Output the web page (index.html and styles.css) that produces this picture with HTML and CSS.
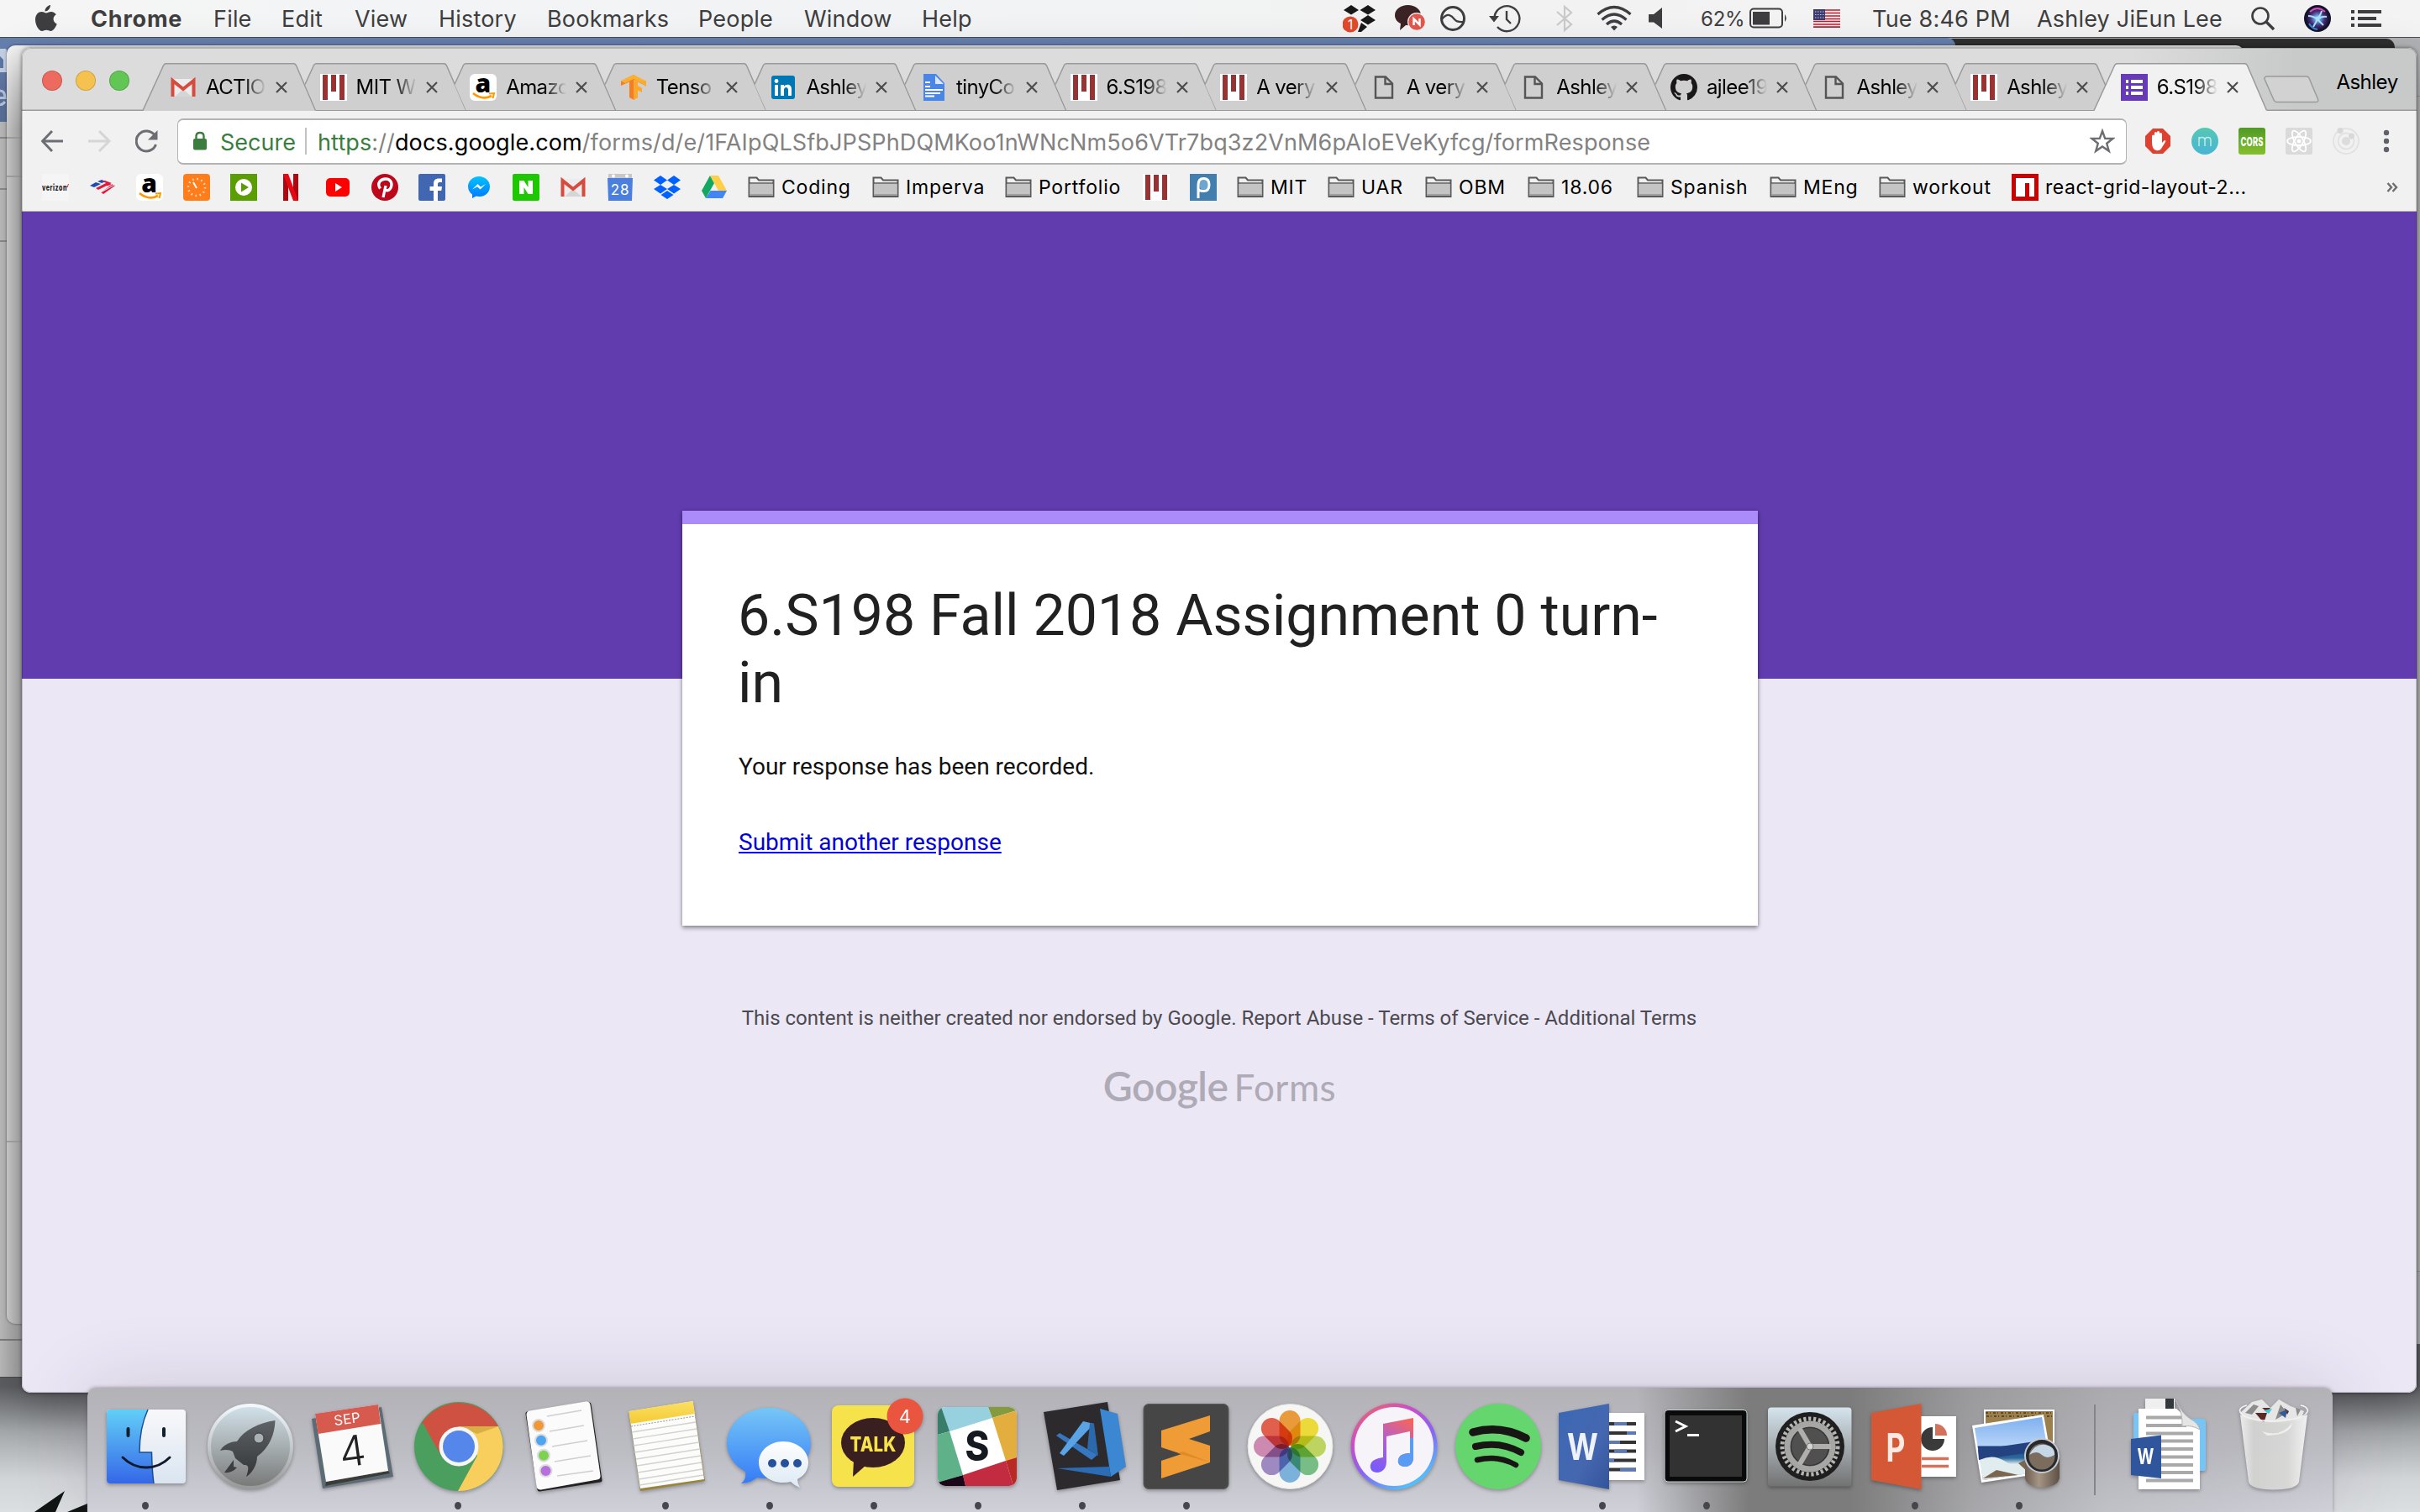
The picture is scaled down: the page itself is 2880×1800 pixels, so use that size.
FILE: index.html
```html
<!DOCTYPE html>
<html lang="en">
<head>
<meta charset="utf-8">
<title>6.S198 Fall 2018 Assignment 0 turn-in</title>
<link rel="stylesheet" href="styles.css">
</head>
<body>
<svg class="defs" width="0" height="0" aria-hidden="true">
  <defs>
    <linearGradient id="gFinder" x1="0" y1="0" x2="0" y2="1"><stop offset="0" stop-color="#62cff7"/><stop offset="1" stop-color="#3567e8"/></linearGradient>
    <linearGradient id="gFinderR" x1="0" y1="0" x2="0" y2="1"><stop offset="0" stop-color="#f8f8fa"/><stop offset="1" stop-color="#dae5f1"/></linearGradient>
    <linearGradient id="gLaunch" x1="0" y1="0" x2="0" y2="1"><stop offset="0" stop-color="#d3e2ea"/><stop offset=".55" stop-color="#a2a9ab"/><stop offset="1" stop-color="#777"/></linearGradient>
    <linearGradient id="gRocket" x1="0" y1="0" x2="0" y2="1"><stop offset="0" stop-color="#5e6366"/><stop offset="1" stop-color="#343638"/></linearGradient>
    <linearGradient id="gRim" x1="0" y1="0" x2="0" y2="1"><stop offset="0" stop-color="#f1f9fd"/><stop offset="1" stop-color="#999"/></linearGradient>
    <linearGradient id="gMsg" x1="0" y1="0" x2="0" y2="1"><stop offset="0" stop-color="#76c6f6"/><stop offset="1" stop-color="#357cf7"/></linearGradient>
    <linearGradient id="gMsgW" x1="0" y1="0" x2="0" y2="1"><stop offset="0" stop-color="#fff"/><stop offset="1" stop-color="#dce9f4"/></linearGradient>
    <linearGradient id="gNote" x1="0" y1="0" x2="0" y2="1"><stop offset="0" stop-color="#fbe066"/><stop offset="1" stop-color="#f4ca32"/></linearGradient>
    <linearGradient id="gRing" x1="0" y1="0" x2=".6" y2="1"><stop offset="0" stop-color="#fa6a52"/><stop offset=".35" stop-color="#c84fc8"/><stop offset=".65" stop-color="#8a62f6"/><stop offset="1" stop-color="#54bdfb"/></linearGradient>
    <linearGradient id="gTune" x1=".8" y1="0" x2=".3" y2="1"><stop offset="0" stop-color="#f2655f"/><stop offset=".5" stop-color="#b25fd0"/><stop offset="1" stop-color="#7b5cf8"/></linearGradient>
    <linearGradient id="gWord" x1="0" y1="0" x2="1" y2="1"><stop offset="0" stop-color="#3c68b4"/><stop offset=".6" stop-color="#4567b0"/><stop offset="1" stop-color="#33549a"/></linearGradient>
    <linearGradient id="gPref" x1="0" y1="0" x2="0" y2="1"><stop offset="0" stop-color="#d5e4ec"/><stop offset=".5" stop-color="#a4abaf"/><stop offset="1" stop-color="#727272"/></linearGradient>
    <linearGradient id="gSea" x1="0" y1="0" x2="0" y2="1"><stop offset="0" stop-color="#7fb0f0"/><stop offset=".45" stop-color="#b5d3f8"/><stop offset=".47" stop-color="#1e3f7e"/><stop offset=".65" stop-color="#2d6a9c"/><stop offset=".75" stop-color="#e3eef0"/><stop offset="1" stop-color="#86715a"/></linearGradient>
    <linearGradient id="gLoupe" x1="0" y1="0" x2="1" y2="0"><stop offset="0" stop-color="#6b5d50"/><stop offset=".4" stop-color="#a59585"/><stop offset="1" stop-color="#5c5044"/></linearGradient>
    <linearGradient id="gBin" x1="0" y1="0" x2="1" y2="0"><stop offset="0" stop-color="#f1f1f1"/><stop offset=".2" stop-color="#d4d4d3"/><stop offset=".7" stop-color="#dadad9"/><stop offset="1" stop-color="#f6f6f6"/></linearGradient>
    <linearGradient id="gCors" x1="0" y1="0" x2="0" y2="1"><stop offset="0" stop-color="#4f9a26"/><stop offset="1" stop-color="#86bf2c"/></linearGradient>
    <linearGradient id="gM" x1="0" y1="0" x2="0" y2="1"><stop offset="0" stop-color="#57c7b4"/><stop offset="1" stop-color="#48b5d3"/></linearGradient>
    <linearGradient id="gMess" x1="0" y1="0" x2="0" y2="1"><stop offset="0" stop-color="#00c3ff"/><stop offset="1" stop-color="#0078ff"/></linearGradient>
    <radialGradient id="gSiri"><stop offset="0" stop-color="#e8f6ff"/><stop offset=".3" stop-color="#5a8fd8"/><stop offset=".6" stop-color="#4b2f78"/><stop offset="1" stop-color="#14102c"/></radialGradient>

    <symbol id="tab" viewBox="0 0 214 57"><path d="M18 25.500 28.500 2.500Q29.500.7 32 .7H183Q185.500.7 186.500 3L209.500 56H31.500Z" fill="#cfcfcf"/><path d="M18 25.500 28.500 2.500Q29.500.7 32 .7H183Q185.500.7 186.500 3L209.500 56" fill="none" stroke="#999" stroke-width="1.500"/></symbol>
    <symbol id="tab-full" viewBox="0 0 214 57"><path d="M4 57 28.500 3Q29.500.7 32 .7H183Q185.500.7 186.500 3L210 57Z" fill="currentColor"/><path d="M4 56.500 28.500 3Q29.500.7 32 .7H183Q185.500.7 186.500 3L209.500 56.500" fill="none" stroke="#999" stroke-width="1.500"/></symbol>
    <symbol id="close" viewBox="0 0 16 16"><path d="M2 2 14 14M14 2 2 14" stroke="#4c4c4c" stroke-width="2.200"/></symbol>
    <symbol id="gmail" viewBox="0 0 32 32"><path d="M2 6H30V27H2Z" fill="#ececec"/><path d="M6 27 16 18 26 27Z" fill="#d5d5d5"/><path d="M3.500 27V8L16 18 28.500 8V27" fill="none" stroke="#d54b3d" stroke-width="4"/></symbol>
    <symbol id="mit" viewBox="0 0 32 32"><path d="M0 0H32V32H0Z" fill="#fff"/><path d="M3 1H9V31H3ZM13 1H19V21H13ZM23 1H29V31H23Z" fill="#933"/></symbol>
    <symbol id="amazon" viewBox="0 0 32 32"><rect width="32" height="32" rx="6" fill="#fff"/><text x="16" y="22" text-anchor="middle" font-family="Open Sans" font-weight="800" font-size="30">a</text><path d="M4 23Q15 32 26 26" fill="none" stroke="#f90" stroke-width="2.600"/><path d="M23 23.500 29 23 27.500 29" fill="none" stroke="#f90" stroke-width="2"/></symbol>
    <symbol id="tf" viewBox="0 0 32 32"><path d="M16 1 1 8.500V14L11 9.500V28L16.500 31V7L26 12V7Z" fill="#f57e20"/><path d="M16 1 1 8.500 6 11 16 6 26 11.500 31 8.500Z" fill="#fdb02e"/><path d="M31 8.500V15L26 12V9ZM16.500 9 21 7V14L26 17V22L21 19.500V28L16.500 31Z" fill="#ffa726"/></symbol>
    <symbol id="linkedin" viewBox="0 0 32 32"><rect x="2" y="2" width="28" height="28" rx="3" fill="#0077b5"/><path d="M6 13H10V26H6ZM13 13H17V15C19 11.500 26 11.500 26 18V26H22V19C22 15 17 15 17 19V26H13Z" fill="#fff"/><circle cx="8" cy="8.500" r="2.400" fill="#fff"/></symbol>
    <symbol id="docs" viewBox="0 0 32 32"><path d="M4 0H19L29 11V32H4Z" fill="#4a86e8"/><path d="M18 2V12H28Z" fill="#dbe7fb"/><path d="M6 10H12M6 15H12M6 19H27M6 23H24M6 26.500H17" stroke="#fff" stroke-width="2"/></symbol>
    <symbol id="file" viewBox="0 0 32 32"><path d="M6 3.500H18L26 11.500V28.500H6Z" fill="none" stroke="#555" stroke-width="2.400"/><path d="M17.500 3.500V12H26" fill="none" stroke="#555" stroke-width="2.400"/></symbol>
    <symbol id="github" viewBox="0 0 16 16"><path fill="#191717" d="M8 0C3.580 0 0 3.580 0 8c0 3.540 2.290 6.530 5.470 7.590.4.070.55-.17.55-.38 0-.19-.01-.82-.01-1.490-2.010.37-2.530-.49-2.690-.94-.09-.23-.48-.94-.82-1.130-.28-.15-.68-.52-.01-.53.63-.01 1.080.58 1.230.82.72 1.210 1.870.87 2.330.66.070-.52.28-.87.51-1.070-1.780-.2-3.640-.89-3.640-3.950 0-.87.31-1.590.82-2.150-.08-.2-.36-1.020.08-2.120 0 0 .67-.21 2.200.82.64-.18 1.320-.27 2-.27s1.360.09 2 .27c1.530-1.040 2.200-.82 2.200-.82.44 1.100.16 1.920.08 2.120.51.56.82 1.270.82 2.150 0 3.070-1.870 3.750-3.650 3.950.29.25.54.73.54 1.480 0 1.070-.01 1.930-.01 2.200 0 .21.15.46.55.38A8.010 8.010 0 0 0 16 8c0-4.420-3.580-8-8-8z"/></symbol>
    <symbol id="forms" viewBox="0 0 32 32"><path d="M0 0H32V32H0Z" fill="#673ab7"/><path d="M6 9H9M6 16H9M6 23H9M12 9H26M12 16H26M12 23H26" stroke="#fff" stroke-width="4"/></symbol>
    <symbol id="folder" viewBox="0 0 32 32"><path d="M1.500 27V4.500H10.500L13 7.500H30.500V27Z" fill="#f0f0f0" stroke="#5a5a5a" stroke-width="2"/><path d="M2.500 12H29.500V26H2.500Z" fill="#c4c4c4"/><path d="M2.500 24H29.500V26H2.500Z" fill="#a0a0a0"/><path d="M1.500 11H30.500" stroke="#5a5a5a" stroke-width="1.600"/></symbol>
  </defs>
</svg>

<div class="wallpaper">
  <svg class="spikes" viewBox="0 0 104 50"><path d="M41 50 77 25 66 50ZM80 50 104 40V50Z" fill="#111513"/></svg>
</div>
<div class="win win-facebook"><svg viewBox="0 0 8 100" width="8" height="100"><path d="M0 13H6Q8 13 8 16V41H0Z" fill="#c5cfe4"/><path d="M0 22 4 26V36H0Z" fill="#5d76a5"/><path d="M0 71.500H6Q6 63 0 63M6 76Q3 80 0 79.500" fill="none" stroke="#b9c6de" stroke-width="3"/></svg></div>
<div class="win win-dark"></div>
<div class="win win-right"></div>
<div class="win win-back"></div>

<header class="menubar">
  <svg width="26" height="32" viewBox="0 0 26 32"><path d="M18 0C18 4 15 7.500 11.500 7.500 11.200 4 14.500.5 18 0ZM13 9.500C14.500 9.500 16 8 19 8 21.500 8 23.500 9.300 24.800 11.200 20 14 20.800 20.500 25.700 22.500 24 27 21 31 18.500 31 16.500 31 15.500 29.800 13.200 29.800 11 29.800 9.800 31 8 31 4.500 31 0 24 0 17.500 0 11 4 8 7.500 8 10 8 11.800 9.500 13 9.500Z" fill="#3e3e40"/></svg>
  <b>Chrome</b><span>File</span><span>Edit</span><span>View</span><span>History</span><span>Bookmarks</span><span>People</span><span>Window</span><span>Help</span>
  <svg width="40" height="34" viewBox="0 0 40 34"><path d="M10 1 19 7 10 12.500 1 7ZM30 1 39 7 30 12.500 20.500 7ZM30 13 39 19 30 24.500 21 19ZM22 22 29 27 22 33 18 33Z" fill="#191919"/><circle cx="9" cy="24" r="9.500" fill="#e0492c"/><text x="9" y="30" text-anchor="middle" font-size="16" fill="#fff">1</text></svg>
  <svg width="38" height="34" viewBox="0 0 38 34"><path d="M15.500 1C7 1 0 6 0 13 0 17.500 2.500 21 7 23L6 31 13 25C24 26 31 21 31 13 31 6 24 1 15.500 1Z" fill="#3b2224"/><circle cx="26" cy="21" r="11" fill="#f2f2f2"/><circle cx="26" cy="21" r="9.800" fill="#e2574c"/><path d="M22.500 25V17.500L29.500 24.500V17" fill="none" stroke="#fff" stroke-width="2.500"/></svg>
  <svg width="31" height="32" viewBox="0 0 31 32"><circle cx="15" cy="16" r="13.500" fill="none" stroke="#3e3e40" stroke-width="3"/><path d="M2 17C9 8 14 13 17 17S25 20 28 20" fill="none" stroke="#3e3e40" stroke-width="2.200"/></svg>
  <svg width="38" height="34" viewBox="0 0 38 34"><path d="M6.500 15A15 15 0 1 1 10 27" fill="none" stroke="#3e3e40" stroke-width="2.400"/><path d="M0 14H12L6 21.500Z" fill="#3e3e40"/><path d="M21 8V18L26 23" fill="none" stroke="#3e3e40" stroke-width="2.400"/></svg>
  <svg width="20" height="34" viewBox="0 0 20 34"><path d="M1 9 18 24 10 31V3L18 10 1 25" fill="none" stroke="#c9c9c9" stroke-width="2.200"/></svg>
  <svg width="42" height="32" viewBox="0 0 42 32"><path d="M1.500 11Q21-6 40.500 11M6.500 17.500Q21 4.500 35.500 17.500M12 23Q21 15 30 23" fill="none" stroke="#3e3e40" stroke-width="3.200"/><path d="M21 30.500 17 26Q21 23 25 26Z" fill="#3e3e40"/></svg>
  <svg width="18" height="26" viewBox="0 0 18 26"><path d="M0 8H6L16 0V25L6 17.500H0Z" fill="#3e3e40"/></svg>
  <span class="battery-text">62%</span>
  <svg width="47" height="26" viewBox="0 0 47 26"><rect x="1" y="1.500" width="38" height="22" rx="4" fill="none" stroke="#3e3e40" stroke-width="2"/><path d="M4 5H24V20.500H4Z" fill="#3e3e40"/><path d="M42 8Q45.500 12.500 42 17Z" fill="#3e3e40"/></svg>
  <svg width="32" height="22" viewBox="0 0 32 22"><path d="M0 0H32V22H0Z" fill="#f4ecec"/><path d="M0 1H32M0 4.500H32M0 8H32M0 11.500H32M0 14.500H32M0 18H32M0 21.200H32" stroke="#b22234" stroke-width="1.700"/><path d="M0 0H14V13H0Z" fill="#3c3b6e"/><path d="M2 3H14M2 6.500H14M2 10H14" stroke="#c9c9dc" stroke-width="1.200" stroke-dasharray="1.500 1.500"/></svg>
  <span>Tue 8:46 PM</span><span>Ashley JiEun Lee</span>
  <svg width="30" height="30" viewBox="0 0 30 30"><circle cx="12" cy="12" r="9.500" fill="none" stroke="#3e3e40" stroke-width="2.600"/><path d="M18.500 18.500 28 28" stroke="#3e3e40" stroke-width="3.400"/></svg>
  <svg width="32" height="32" viewBox="0 0 32 32"><circle cx="16" cy="16" r="16" fill="#15122b"/><circle cx="16" cy="16" r="14" fill="url(#gSiri)"/><path d="M5 13Q11 13 16 17 20 11 21 7M16 17Q21 13 27 14M16 17 11 26M16 17 23 24" stroke="#a5e3f4" stroke-width="2" fill="none"/><path d="M7 8Q16 0 25 8" stroke="#d34fb5" stroke-width="2" fill="none"/><path d="M6 22Q9 28 16 29" stroke="#2f8bd8" stroke-width="2" fill="none"/></svg>
  <svg width="36" height="22" viewBox="0 0 36 22"><path d="M0 3H4M0 11H4M0 19H4M8 3H36M8 11H30M8 19H36" stroke="#3e3e40" stroke-width="4"/></svg>
</header>

<main class="browser">
  <div class="tabstrip">
    <div class="lights"><i class="red"></i><i class="yellow"></i><i class="green"></i></div>
    <div class="tabs">
      <div class="tab"><svg class="shape"><use href="#tab-full"/></svg><svg class="fav"><use href="#gmail"/></svg><span>ACTIO</span><svg class="x"><use href="#close"/></svg></div>
      <div class="tab"><svg class="shape"><use href="#tab"/></svg><svg class="fav"><use href="#mit"/></svg><span>MIT W</span><svg class="x"><use href="#close"/></svg></div>
      <div class="tab"><svg class="shape"><use href="#tab"/></svg><svg class="fav"><use href="#amazon"/></svg><span>Amazo</span><svg class="x"><use href="#close"/></svg></div>
      <div class="tab"><svg class="shape"><use href="#tab"/></svg><svg class="fav"><use href="#tf"/></svg><span>Tenso</span><svg class="x"><use href="#close"/></svg></div>
      <div class="tab"><svg class="shape"><use href="#tab"/></svg><svg class="fav"><use href="#linkedin"/></svg><span>Ashley</span><svg class="x"><use href="#close"/></svg></div>
      <div class="tab"><svg class="shape"><use href="#tab"/></svg><svg class="fav"><use href="#docs"/></svg><span>tinyCo</span><svg class="x"><use href="#close"/></svg></div>
      <div class="tab"><svg class="shape"><use href="#tab"/></svg><svg class="fav"><use href="#mit"/></svg><span>6.S198</span><svg class="x"><use href="#close"/></svg></div>
      <div class="tab"><svg class="shape"><use href="#tab"/></svg><svg class="fav"><use href="#mit"/></svg><span>A very</span><svg class="x"><use href="#close"/></svg></div>
      <div class="tab"><svg class="shape"><use href="#tab"/></svg><svg class="fav"><use href="#file"/></svg><span>A very</span><svg class="x"><use href="#close"/></svg></div>
      <div class="tab"><svg class="shape"><use href="#tab"/></svg><svg class="fav"><use href="#file"/></svg><span>Ashley</span><svg class="x"><use href="#close"/></svg></div>
      <div class="tab"><svg class="shape"><use href="#tab"/></svg><svg class="fav"><use href="#github"/></svg><span>ajlee19</span><svg class="x"><use href="#close"/></svg></div>
      <div class="tab"><svg class="shape"><use href="#tab"/></svg><svg class="fav"><use href="#file"/></svg><span>Ashley</span><svg class="x"><use href="#close"/></svg></div>
      <div class="tab"><svg class="shape"><use href="#tab"/></svg><svg class="fav"><use href="#mit"/></svg><span>Ashley</span><svg class="x"><use href="#close"/></svg></div>
      <div class="tab active"><svg class="shape"><use href="#tab-full"/></svg><svg class="fav"><use href="#forms"/></svg><span>6.S198</span><svg class="x"><use href="#close"/></svg></div>
    </div>
    <svg class="newtab" width="66" height="33" viewBox="0 0 66 33"><path d="M4 1H51Q53 1 54 3L64.500 28Q65.500 31.500 62 31.500H15Q13 31.500 12 29L1 4Q.5 1 4 1Z" fill="#d2d2d2" stroke="#9b9b9b" stroke-width="1.500"/></svg>
    <span class="profile">Ashley</span>
  </div>

  <div class="toolbar">
    <svg width="28" height="28" viewBox="0 0 28 28"><path d="M26 14H2M13 2 1.500 14 13 26" fill="none" stroke="#6c6e73" stroke-width="3"/></svg>
    <svg width="28" height="28" viewBox="0 0 28 28"><path d="M0 14H25M13 2 25 14 13 26" fill="none" stroke="#d5d5d5" stroke-width="3"/></svg>
    <svg width="28" height="28" viewBox="0 0 28 28"><path d="M23 7A12 12 0 1 0 24.500 18" fill="none" stroke="#6c6e73" stroke-width="3"/><path d="M26.500 1V12.500H15Z" fill="#6c6e73"/></svg>
    <div class="omnibox">
      <svg width="18" height="24" viewBox="0 0 18 24"><rect x="0" y="9" width="16" height="13.500" rx="2" fill="#3a7d3e"/><path d="M3.500 10V6Q3.500 2 8 2T12.500 6V10" fill="none" stroke="#3a7d3e" stroke-width="2.400"/></svg>
      <span class="secure">Secure</span><i class="rule"></i>
      <span class="url"><em>https</em>://<b>docs.google.com</b>/forms/d/e/1FAIpQLSfbJPSPhDQMKoo1nWNcNm5o6VTr7bq3z2VnM6pAIoEVeKyfcg/formResponse</span>
      <svg width="30" height="30" viewBox="0 0 30 30"><path d="M15 3 18.200 11.800 27.500 12 20.200 17.800 22.800 26.800 15 21.500 7.200 26.800 9.800 17.800 2.500 12 11.800 11.800Z" fill="none" stroke="#6c6e73" stroke-width="2.400"/></svg>
    </div>
    <div class="extensions">
      <svg width="32" height="32" viewBox="0 0 32 32"><path d="M10 1H22L31 10V22L22 31H10L1 22V10Z" fill="#e0402f"/><path d="M9 17V9.500Q10.500 7.500 12 9.500V15V6Q13.500 4 15 6V14V5Q16.500 3 18 5V14V7Q19.500 5 21 7V18L24 15Q26 15 25 17L20 25Q18 28 14 27 9 26 9 17Z" fill="#fff"/></svg>
      <svg width="32" height="32" viewBox="0 0 32 32"><circle cx="16" cy="16" r="16" fill="url(#gM)"/><path d="M9 22V11M9 15Q9 11.500 12.500 11.500T16 15V22M16 15Q16 11.500 19.500 11.500T23 15V22" fill="none" stroke="#bfeaea" stroke-width="1.500"/></svg>
      <svg width="32" height="32" viewBox="0 0 32 32"><rect width="32" height="32" rx="3" fill="url(#gCors)"/><text x="16" y="21.500" text-anchor="middle" font-size="15" font-weight="800" textLength="27" lengthAdjust="spacingAndGlyphs" fill="#fff">CORS</text></svg>
      <svg width="32" height="32" viewBox="0 0 32 32"><rect width="32" height="32" rx="2" fill="#dadada"/><g fill="none" stroke="#fff" stroke-width="1.800"><ellipse cx="16" cy="16" rx="14" ry="5"/><ellipse cx="16" cy="16" rx="14" ry="5" transform="rotate(60 16 16)"/><ellipse cx="16" cy="16" rx="14" ry="5" transform="rotate(120 16 16)"/></g><circle cx="16" cy="16" r="2.500" fill="#fff"/></svg>
      <svg width="32" height="32" viewBox="0 0 32 32"><g fill="none" stroke="#e2e2e2" stroke-width="2"><circle cx="16" cy="16" r="15"/><circle cx="16" cy="16" r="9.500"/></g><circle cx="16" cy="16" r="5" fill="#dcdcdc"/><circle cx="9" cy="3.500" r="3.500" fill="#d8d8d8"/><circle cx="22.500" cy="10" r="3.500" fill="#d8d8d8"/></svg>
      <svg width="8" height="28" viewBox="0 0 8 28"><circle cx="4" cy="4" r="3.200" fill="#5f6368"/><circle cx="4" cy="14" r="3.200" fill="#5f6368"/><circle cx="4" cy="24" r="3.200" fill="#5f6368"/></svg>
    </div>
  </div>

  <nav class="bookmarks">
    <a><svg viewBox="0 0 32 32"><path d="M0 0H32V32H0Z" fill="#f5f5f5"/><text x="0" y="20" font-size="10" font-weight="800" textLength="30" lengthAdjust="spacingAndGlyphs" fill="#222">verizon</text><path d="M28.500 14 30 16 31.500 12" fill="none" stroke="#d03030"/></svg></a>
    <a><svg viewBox="0 0 32 32"><path d="M1 14 8 10 14 12 6 16ZM10 9 15 7 20 9 15 11Z" fill="#1a4fb0"/><path d="M8 17 22 10 31 14 17 24 14 22 24 15 21 14 11 19ZM15 8 19 8 27 11 22 12Z" fill="#e4183a"/><path d="M11 20 27 12.500M14 22 30 13" stroke="#f2f2f2" stroke-width="1"/></svg></a>
    <a><svg><use href="#amazon"/></svg></a>
    <a><svg viewBox="0 0 32 32"><rect width="32" height="32" rx="4" fill="#ff7d1a"/><circle cx="16" cy="16" r="10" fill="none" stroke="#ffe3cc" stroke-width="2.500" stroke-dasharray="1.500 3.730"/><path d="M12 10 16 17" stroke="#fff" stroke-width="2"/></svg></a>
    <a><svg viewBox="0 0 32 32"><path d="M0 0H32V32H0Z" fill="#5a9e04"/><circle cx="16" cy="16" r="10" fill="#fff"/><path d="M13 10.500 22 16 13 21.500Z" fill="#5a9e04"/></svg></a>
    <a><svg viewBox="0 0 32 32"><path d="M7 0H13V32H7ZM19 0H25V32H19Z" fill="#b1060f"/><path d="M7 0H13L25 32H19Z" fill="#e50914"/></svg></a>
    <a><svg viewBox="0 0 32 32"><rect x="2" y="5" width="28" height="22" rx="5" fill="#f00"/><path d="M13 11 21 16 13 21Z" fill="#fff"/></svg></a>
    <a><svg viewBox="0 0 32 32"><circle cx="16" cy="16" r="16" fill="#bd081c"/><path d="M14 28 17 14M10.500 17.500C6 11 11 6 17 6 23 6 25 11 23.500 15.500 22 20 17.500 21 15.500 18" fill="none" stroke="#fff" stroke-width="3.300"/></svg></a>
    <a><svg viewBox="0 0 32 32"><rect width="32" height="32" rx="2" fill="#4267b2"/><path d="M18 32V20H13.500V15H18V11.500C18 7.500 20.500 5.500 24 5.500H28V10H25C23.300 10 23 11 23 12.500V15H28L27.300 20H23V32Z" fill="#fff"/></svg></a>
    <a><svg viewBox="0 0 32 32"><path d="M16 3C9 3 3 8 3 15 3 19 5 22.500 8 24.500V29L12.500 26.600C23 29 29 22 29 15 29 8 23 3 16 3Z" fill="url(#gMess)"/><path d="M8 18.500 14.500 12 18 15.500 24 12 17.500 18.500 14 15.300Z" fill="#fff"/></svg></a>
    <a><svg viewBox="0 0 32 32"><rect width="32" height="32" rx="2" fill="#1ec800"/><path d="M8 8H13.500L18.500 16V8H24V24H18.500L13.500 16V24H8Z" fill="#fff"/></svg></a>
    <a><svg><use href="#gmail"/></svg></a>
    <a><svg viewBox="0 0 32 32"><path d="M2 0H30V6H2Z" fill="#c8c8c8"/><circle cx="8" cy="2.500" r="2" fill="#fff"/><circle cx="24" cy="2.500" r="2" fill="#fff"/><path d="M1 5H31L30 32H2Z" fill="#4a7fe0"/><text x="16" y="25" text-anchor="middle" font-size="17" fill="#fff">28</text></svg></a>
    <a><svg viewBox="0 0 32 32"><path d="M8 2 16 7.500 8 13 0 7.500ZM24 2 32 7.500 24 13 16 7.500ZM8 13 16 18 8 23.500 0 18ZM24 13 32 18 24 23.500 16 18ZM16 20 23.500 25 16 30 8.500 25Z" fill="#0061ff"/></svg></a>
    <a><svg viewBox="0 0 32 32"><path d="M11 2 16 11 6 29 1 20Z" fill="#11a861"/><path d="M11 2H21L31 20H21Z" fill="#ffcf48"/><path d="M11.500 20H31L26 29H6Z" fill="#4285f4"/></svg></a>
    <a><svg><use href="#folder"/></svg>Coding</a>
    <a><svg><use href="#folder"/></svg>Imperva</a>
    <a><svg><use href="#folder"/></svg>Portfolio</a>
    <a><svg><use href="#mit"/></svg></a>
    <a><svg viewBox="0 0 32 32"><path d="M0 0H32V32H0Z" fill="#427eae"/><circle cx="17" cy="13" r="6" fill="#6ea6d0"/><path d="M10 29V13Q10 5.500 16.500 5.500T23 13 16.500 20.500 12 18" fill="none" stroke="#fff" stroke-width="3"/></svg></a>
    <a><svg><use href="#folder"/></svg>MIT</a>
    <a><svg><use href="#folder"/></svg>UAR</a>
    <a><svg><use href="#folder"/></svg>OBM</a>
    <a><svg><use href="#folder"/></svg>18.06</a>
    <a><svg><use href="#folder"/></svg>Spanish</a>
    <a><svg><use href="#folder"/></svg>MEng</a>
    <a><svg><use href="#folder"/></svg>workout</a>
    <a class="tight"><svg viewBox="0 0 32 32"><path d="M0 0H32V32H0Z" fill="#cb0000"/><path d="M5 5H27V27H21V11H16V27H5Z" fill="#fff"/></svg>react-grid-layout-2...</a>
    <svg class="more" viewBox="0 0 14 12"><path d="M1.500 1 6 6 1.500 11M7.500 1 12 6 7.500 11" fill="none" stroke="#6c6e73" stroke-width="2.400"/></svg>
  </nav>

  <section class="page">
    <article class="card">
      <h1>6.S198 Fall 2018 Assignment 0 turn-in</h1>
      <p>Your response has been recorded.</p>
      <a href="#">Submit another response</a>
    </article>
    <p class="legal">This content is neither created nor endorsed by Google. Report Abuse - Terms of Service - Additional Terms</p>
    <p class="logo"><b>Google</b><span>Forms</span></p>
  </section>
</main>

<footer class="dock">
  <div class="app run"><svg viewBox="0 0 124 148"><rect x="15" y="26" width="94" height="88" rx="4" fill="url(#gFinderR)"/><path d="M64 26H19Q15 26 15 30V110Q15 114 19 114H71Q69 100 68.500 77H54Q54 48 64 26Z" fill="url(#gFinder)"/><path d="M64 26Q54 48 54 77H68.500Q69 100 71 114" fill="none" stroke="#1c4f8e" stroke-width="1.500"/><path d="M40.500 49V57M83 49V57" stroke="#10202e" stroke-width="4" stroke-linecap="round"/><path d="M34 83Q46 95 62 95T90 83" fill="none" stroke="#101a2c" stroke-width="3" stroke-linecap="round"/></svg></div>
  <div class="app"><svg viewBox="0 0 124 148"><circle cx="62" cy="70" r="49" fill="url(#gLaunch)" stroke="url(#gRim)" stroke-width="4"/><path d="M91.500 39C72 42 55 50 46 64 38 64 30 68 26 75 32 73 38 74 41 76L44 84 54 92C58 92 62 92 57 106 64 102 70 92 70 82 84 72 91 56 91.500 39Z" fill="url(#gRocket)"/><path d="M42 86 31 101Q40 102 46 95L42 94Z" fill="#3c3e40"/><circle cx="72" cy="60" r="6" fill="#a9b1b5" stroke="#3b3d3f"/></svg></div>
  <div class="app"><svg viewBox="0 0 124 148"><path d="M11 37 94 23 108 106 24 120Z" fill="#5d6b75"/><path d="M28 112 102 99 104 102 27 117Z" fill="#3b3b38"/><path d="M15 31 90 20 102 99 28 112Z" fill="#fafafa"/><path d="M15 31 90 20 93 43 18.600 55Z" fill="#d75a4f"/><text transform="translate(54 43) rotate(-8)" text-anchor="middle" font-size="16.500" fill="#fff">SEP</text><text transform="translate(62 93) rotate(-8)" text-anchor="middle" font-size="50" font-weight="300" fill="#222">4</text></svg></div>
  <div class="app run"><svg viewBox="0 0 124 148"><circle cx="62" cy="70" r="53" fill="#4a9f5f"/><path d="M62 70 18 42A53 53 0 0 1 109 46H62Z" fill="#cf5141"/><path d="M62 46H109A53 53 0 0 1 61 123L84 81Z" fill="#f8cf5c"/><path d="M18.500 40.500 39 78 62 46Z" fill="#cf5141"/><path d="M62 46H109L84 55Z" fill="#b98d2c" opacity=".5"/><circle cx="62" cy="70" r="23.500" fill="#f6f6f6"/><circle cx="62" cy="70" r="19" fill="#5586ea"/></svg></div>
  <div class="app"><svg viewBox="0 0 124 148"><path d="M20 31 93 20 106 110 34 121Z" fill="#222" stroke="#222" stroke-width="5" stroke-linejoin="round"/><path d="M23 32 90 21 102 105 35 117Z" fill="#fbfbfb" stroke="#fbfbfb" stroke-width="9" stroke-linejoin="round"/><path d="M43 34 84 27M46 52 87 45M49 70 91 63M52 88 95 81M55 105 98 99" stroke="#cfcfcf" stroke-width="1.500"/><g stroke="#ddd" stroke-width="2"><circle cx="33" cy="45" r="7" fill="#f09837"/><circle cx="36" cy="62.700" r="7" fill="#4ea5ef"/><circle cx="39" cy="80.700" r="7" fill="#7dd252"/><circle cx="41.500" cy="99" r="7" fill="#b670dc"/></g></svg></div>
  <div class="app run"><svg viewBox="0 0 124 148"><path d="M17.500 28 93.500 16 108 111 31 123Z" fill="#9a8436"/><path d="M17.500 28 93.500 16 107 109 31 120Z" fill="#fcfcfa"/><path d="M17.500 28 93.500 16 96 31 19.500 43Z" fill="url(#gNote)"/><path d="M20 46 96 34" stroke="#999" stroke-width="1" stroke-dasharray="2 1.500"/><path d="M21 53 97 41M22 61 98 49M23 69 99 57M24 77 101 65M26 85 102 73M27 93 103 81M28 101 104 89M29 109 105 97M30 116 106 104" stroke="#d2d2cf" stroke-width="1.300"/></svg></div>
  <div class="app run"><svg viewBox="0 0 124 148"><path d="M60 24C32 24 10 43 10 66 10 80 18 92 32 100 33 107 31 111 27 114 36 114 42 110 46 107 80 113 110 93 110 66 110 43 88 24 60 24Z" fill="url(#gMsg)"/><path d="M77 64C61 64 48 75 48 89S61 113 77 113Q82 113 86 112 91 117 97 119 94 114 94 109C102 105 107 98 107 89 107 75 94 64 77 64Z" fill="url(#gMsgW)"/><circle cx="64" cy="90" r="5" fill="#25529b"/><circle cx="79" cy="90" r="5" fill="#25529b"/><circle cx="94" cy="90" r="5" fill="#25529b"/></svg></div>
  <div class="app run"><svg viewBox="0 0 124 148"><rect x="11" y="21" width="98" height="97" rx="8" fill="#f6e24b"/><ellipse cx="60" cy="65.500" rx="38" ry="29.500" fill="#3a1f20"/><path d="M37 86 36 106 52 92Z" fill="#3a1f20"/><text x="60" y="75.500" text-anchor="middle" font-size="24" font-weight="800" textLength="55" lengthAdjust="spacingAndGlyphs" fill="#f6e24b">TALK</text><circle cx="98" cy="34" r="21.500" fill="#ea553f"/><text x="98" y="42" text-anchor="middle" font-size="22" fill="#fff">4</text></svg></div>
  <div class="app run"><svg viewBox="0 0 124 148"><clipPath id="cSlack"><rect x="13" y="23" width="94" height="94" rx="9"/></clipPath><g clip-path="url(#cSlack)"><path d="M13 23H107V117H13Z" fill="#fff"/><path d="M13 23H73L78 36 27 52Z" fill="#97d0df"/><path d="M73 23H107V27L78 36Z" fill="#849a41"/><path d="M78 36 107 27V83L94 87Z" fill="#e3ae3e"/><path d="M94 87 107 83V117H103Z" fill="#b92a25"/><path d="M43 104 94 87 103 117H46Z" fill="#c32b40"/><path d="M13 117V112L43 104 46 117Z" fill="#1b0718"/><path d="M13 23 17 23 27 52 13 56Z" fill="#387d69"/><path d="M13 56 27 52 43 104 13 113Z" fill="#5eb188"/></g><text x="60" y="87" text-anchor="middle" font-size="49" font-weight="800" textLength="29" lengthAdjust="spacingAndGlyphs" fill="#141a20">S</text></svg></div>
  <div class="app run"><svg viewBox="0 0 124 148"><path d="M15 29 91 17 106 110 31 122Z" fill="#2c2a2d"/><path d="M82 25 103 31 113 94 95 106Z" fill="#3b87d2"/><path d="M95 106 31 96 93 94Z" fill="#2a6cb5"/><path d="M30 57 34 54 79 80 72 86Z" fill="#3777c0"/><path d="M34 78 62 40 75 43 39 81Z" fill="#5aa4e6"/><path d="M70 42 75 43 80 81 67 73Z" fill="#2c68ac"/></svg></div>
  <div class="app run"><svg viewBox="0 0 124 148"><rect x="10" y="19.500" width="101" height="101" rx="6" fill="#464646" stroke="#5c5c5c"/><path d="M31 51 89 33V52L64 61 89 69V89L31 108V87L55 79 31 71Z" fill="#f09c36"/><path d="M50 78 57 76 89 89Z" fill="#d98520" opacity=".7"/></svg></div>
  <div class="app"><svg viewBox="0 0 124 148"><circle cx="60.500" cy="70" r="50.500" fill="#f6f6f5" stroke="#e0e0e0"/><g class="petals" transform="translate(60 70)"><rect x="-12.500" y="-43" width="25" height="42" rx="12.500" fill="#f2a03c"/><rect x="-12.500" y="-43" width="25" height="42" rx="12.500" fill="#f5e23d" transform="rotate(45)"/><rect x="-12.500" y="-43" width="25" height="42" rx="12.500" fill="#c4dc64" transform="rotate(90)"/><rect x="-12.500" y="-43" width="25" height="42" rx="12.500" fill="#7cc48a" transform="rotate(135)"/><rect x="-12.500" y="-43" width="25" height="42" rx="12.500" fill="#7fb8e4" transform="rotate(180)"/><rect x="-12.500" y="-43" width="25" height="42" rx="12.500" fill="#a48fc8" transform="rotate(225)"/><rect x="-12.500" y="-43" width="25" height="42" rx="12.500" fill="#d58fb8" transform="rotate(270)"/><rect x="-12.500" y="-43" width="25" height="42" rx="12.500" fill="#ea6250" transform="rotate(315)"/></g></svg></div>
  <div class="app"><svg viewBox="0 0 124 148"><circle cx="60" cy="70" r="51.500" fill="url(#gRing)"/><circle cx="60" cy="70" r="47" fill="#f7f4f9"/><path d="M47 43 83 36V83C83 90 79 94 73 94 67 94 64 90 65 86 66 80 72 78 79 78V52L51 58V88C51 96 46 101 40 101 34 101 31 97 32 92 33 86 40 84 47 83Z" fill="url(#gTune)"/><path d="M79 60H83V83C83 90 79 94 73 94 67 94 64 90 65 86 66 80 72 78 79 78Z" fill="#5a9bf3"/></svg></div>
  <div class="app"><svg viewBox="0 0 124 148"><circle cx="60" cy="70" r="51" fill="#65d56e"/><g fill="none" stroke="#171614" stroke-linecap="round"><path d="M30 53Q62 44 93 60" stroke-width="9.500"/><path d="M33 70Q62 63 87 77" stroke-width="8"/><path d="M35 86Q60 80 81 92" stroke-width="6.500"/></g></svg></div>
  <div class="app run"><svg viewBox="0 0 124 148"><path d="M60 30H111V110H60Z" fill="#fff"/><path d="M69 43H101M69 54H101M69 65H101M69 75.500H101M69 86.500H101M69 97.500H101" stroke="#333" stroke-width="4"/><path d="M75 43H90M90 54H101M69 65H82M75 75.500H90M69 86.500H75M82 97.500H101" stroke="#5b7ab5" stroke-width="4"/><path d="M9 30 69 19V121L9 110Z" fill="url(#gWord)"/><text x="37.500" y="86" text-anchor="middle" font-size="44" font-weight="700" textLength="37" lengthAdjust="spacingAndGlyphs" fill="#eef2fa">W</text></svg></div>
  <div class="app run"><svg viewBox="0 0 124 148"><rect x="11" y="26.500" width="98" height="85.500" rx="4" fill="#0a0a0a" stroke="#c9d3d6"/><path d="M17 33H103V106H17Z" fill="#323232"/><path d="M24 40 36 46 24 52" fill="none" stroke="#fff" stroke-width="3"/><path d="M38 56.500H52" stroke="#fff" stroke-width="3"/></svg></div>
  <div class="app"><svg viewBox="0 0 124 148"><rect x="10" y="23.500" width="99.500" height="94" rx="4" fill="url(#gPref)"/><circle cx="60" cy="70" r="41" fill="#1f1f1f"/><circle cx="60" cy="70" r="33" fill="none" stroke="#b5b5b3" stroke-width="5" stroke-dasharray="3.200 2.700"/><circle cx="60" cy="70" r="27" fill="#505050" stroke="#a6a6a4" stroke-width="7"/><circle cx="60" cy="70" r="22.500" fill="none" stroke="#333" stroke-width="1.200"/><path d="M60 70H85M60 70 47.500 48.500M60 70 47.500 91.500" stroke="#b0afad" stroke-width="6"/><circle cx="60" cy="70" r="4" fill="#d5d5d5" stroke="#777"/></svg></div>
  <div class="app run"><svg viewBox="0 0 124 148"><path d="M60 34H110V106H60Z" fill="#fff"/><path d="M82 47A14 14 0 1 0 96 61H82Z" fill="#3a3a3a"/><path d="M85 43A14 14 0 0 1 99 57H85Z" fill="#d5705b"/><path d="M69 84.500H101M69 93.500H101" stroke="#d5705b" stroke-width="3.500"/><path d="M9 30 68.500 19V121L9 110Z" fill="#d55836"/><text x="38" y="88" text-anchor="middle" font-size="46" font-weight="700" textLength="23" lengthAdjust="spacingAndGlyphs" fill="#fbe9e3">P</text></svg></div>
  <div class="app run"><svg viewBox="0 0 124 148"><path d="M19 26H103V100H19Z" fill="#fff"/><path d="M21 28H101V98H21Z" fill="#9b7f4d"/><path d="M21 30H101M22 34H101" stroke="#5e4a28" stroke-width="2" stroke-dasharray="3 2 1 3"/><path d="M5 45 90 32 102 100 16 113Z" fill="#fff"/><path d="M8 48 88 35 99 98 18 110Z" fill="url(#gSea)"/><path d="M12 74 93 62 95 74 13 86Z" fill="#23427f"/><path d="M14 86Q30 78 45 88T75 82L98 90 99 98 18 110Z" fill="#e1ecef"/><path d="M18 108 34 98 60 104ZM60 90 72 84V101Z" fill="#7a6650"/><path d="M68 78V108Q70 118 90 119 108 117 109 107V76Z" fill="url(#gLoupe)"/><circle cx="88" cy="81" r="20" fill="#26292d" stroke="#c6cacf" stroke-width="2"/><circle cx="88" cy="82" r="15.500" fill="#7b6c5e"/><path d="M73 80Q80 66 92 68T103 80Q94 86 88 80T73 80Z" fill="#c6d7e6"/></svg></div>
  <i class="sep"></i>
  <div class="app"><svg viewBox="0 0 124 148"><path d="M21 32Q21 30 24 30H50L54 37H103Q107 37 107 41V97Q107 99 104 99H21Z" fill="#76c5f6"/><path d="M35 13H70V40H35Z" fill="#efefef"/><path d="M59 13H69V25H59Z" fill="#33383d"/><path d="M27 25H72L100 50V121H27Z" fill="#fff"/><path d="M36 35.500H80M36 45H84M36 54.500H92M36 63.500H92M36 73H92M36 82.500H92M36 92H92M36 101H92M36 110.500H92" stroke="#a9a9a9" stroke-width="4"/><path d="M71 14Q79 32 90 38 98 42 100 50 90 44 79 46 80 30 71 14Z" fill="#e5e5e5" stroke="#b5b5b5"/><path d="M18 61 54 56.500V108L18 104Z" fill="#2f559c"/><text x="35.500" y="91" text-anchor="middle" font-size="25" font-weight="700" textLength="20" lengthAdjust="spacingAndGlyphs" fill="#fff">W</text></svg></div>
  <div class="app"><svg viewBox="0 0 124 148"><path d="M24 30 38 17 50 14 60 24 70 14 84 22 100 28 96 38 78 42 52 42 30 38Z" fill="#e6e6e6"/><path d="M30 30 40 20 46 22 38 32ZM66 38 72 20 80 30ZM90 24 96 26 92 34Z" fill="#8d8d8d"/><path d="M42 30 56 30 52 42ZM50 24 60 24 56 29ZM76 24 82 28 80 32Z" fill="#5a2a26"/><path d="M52 27 62 25 58 31Z" fill="#42c8d8"/><path d="M70 30 80 26 78 36Z" fill="#2f5b9c"/><path d="M24 32Q62 50 104 32L94 112Q92 121 64 121.500 36 121 34 112Z" fill="url(#gBin)" opacity=".95"/><path d="M50 52Q72 60 86 42 84 56 56 57Z" fill="#fff" opacity=".6"/><path d="M23.500 27Q24 38 62 40 103 38 104.500 27 103 22 96 21M32 21Q24 23 23.500 27" fill="none" stroke="#f4f4f4" stroke-width="1.600"/></svg></div>
</footer>
</body>
</html>
```
FILE: styles.css
```css
* { box-sizing: border-box; }
html, body { margin: 0; height: 100%; }
body {
  position: relative;
  width: 2880px;
  height: 1800px;
  overflow: hidden;
  background: #b0b2b5;
  font-family: Inter, "Liberation Sans", sans-serif;
  letter-spacing: .2px;
}
svg { display: block; flex: none; }
.defs { position: absolute; }

/* desktop and the windows lying behind the browser */
.wallpaper {
  position: absolute;
  inset: 1600px 0 0 0;
  background: linear-gradient(#5c5e61 25%, #a4a7aa 52%, #d2d5d8 80%, #dcdfe2 100%);
}
.spikes { position: absolute; left: 0; bottom: 0; width: 104px; height: 50px; }
.win { position: absolute; }
.win-facebook {
  left: 0; top: 45px; width: 2327px; height: 1595px;
  border-bottom: 1px solid #4a4a4a;
  border-radius: 0 10px 0 0;
  background:
    linear-gradient(#8a8a8a, #8a8a8a) 0 118px / 26px 2px no-repeat,
    linear-gradient(#8a8a8a, #8a8a8a) 0 179px / 26px 2px no-repeat,
    linear-gradient(#8a8a8a, #8a8a8a) 0 241px / 26px 2px no-repeat,
    linear-gradient(#7d7d7d, #7d7d7d) 0 1549px / 26px 2px no-repeat,
    linear-gradient(#6680ae, #5a6f99) 0 0 / 100% 100px no-repeat,
    linear-gradient(to right, #bcbcbc, #a2a2a2 26px);
}
.win-dark { left: 2300px; top: 46px; width: 550px; height: 400px; border-radius: 0 10px 0 0; background: #2e2e2e; z-index: -1; }
.win-right { left: 2860px; top: 114px; width: 40px; height: 1400px; border-radius: 10px; background: #b4b4b4; border: 1px solid #999; }
.win-back {
  left: 8px; top: 54px; width: 2663px; height: 1522px;
  border-radius: 10px;
  box-shadow: 0 0 3px rgba(0,0,0,.5);
  background:
    linear-gradient(#a8a8a8, #a8a8a8) 0 109px / 18px 2px no-repeat,
    linear-gradient(#a8a8a8, #a8a8a8) 0 155px / 18px 2px no-repeat,
    linear-gradient(#a8a8a8, #a8a8a8) 0 1304px / 18px 2px no-repeat,
    linear-gradient(to bottom, rgba(255,255,255,.8), rgba(255,255,255,0) 100px),
    linear-gradient(to right, #d0d0d0, #adadad 18px);
}

/* macOS menu bar */
.menubar {
  position: relative;
  display: grid;
  grid-template-columns: 66px 147px 81px 87px 100px 129px 180px 126px 140px 500px 62px 54px 58px 80px 48px 62px 62px 58px 76px 71px 196px 253px 64px 56px auto;
  align-items: center;
  height: 45px;
  padding-left: 42px;
  background: linear-gradient(to right, #f5f5f5, #f1f3f5 30%, #f2f2f2 60%, #f3f3f4);
  border-bottom: 1.500px solid #4b4b4e;
  color: #3e3e40;
  font-size: 27px;
  white-space: nowrap;
}
.menubar > span { margin-left: -1px; }
.menubar > b { font-weight: 700; letter-spacing: .8px; margin-left: 0; }
.menubar > .battery-text { font-size: 24px; letter-spacing: -.2px; margin-left: 0; }

/* browser window */
.browser {
  position: absolute;
  left: 26px; top: 57px;
  display: flex;
  flex-direction: column;
  width: 2850px;
  height: 1601px;
  border-radius: 10px;
  overflow: hidden;
  background: #f1f1f1;
  box-shadow: 0 0 4px rgba(0,0,0,.5), 0 16px 50px rgba(0,0,0,.25);
}
.browser::after { content: ""; position: absolute; inset: 0; border-radius: 10px; box-shadow: inset 0 0 0 1px rgba(0,0,0,.18); pointer-events: none; }
.tabstrip {
  display: flex;
  height: 75px;
  background: linear-gradient(to right, #dcdcdc, #dcdcdc 88%, #c8c9c9 95%, #c8c9c9);
  box-shadow: inset 0 -1.500px #999;
}
.lights { display: flex; gap: 16px; width: 170px; padding: 27px 0 0 24px; }
.lights i { width: 24px; height: 24px; border-radius: 50%; border: 1px solid rgba(0,0,0,.16); }
.red { background: #ed6a5f; }
.yellow { background: #f5c14f; }
.green { background: #62c655; }
.tabs { display: flex; width: 2500.400px; padding-top: 18px; }
.tab {
  position: relative;
  display: flex;
  align-items: center;
  width: 178.600px;
  height: 57px;
  padding-left: 6px;
  color: #cfcfcf;
}
.shape { position: absolute; left: -30px; top: 0; width: 214px; height: 57px; overflow: visible; }
.tab.active { color: #f1f1f1; }
.fav { position: relative; width: 32px; height: 32px; }
.tab span {
  position: relative;
  width: 72px;
  margin-left: 11px;
  overflow: hidden;
  color: #000;
  font-size: 24px;
  letter-spacing: -.6px;
  white-space: nowrap;
  -webkit-mask-image: linear-gradient(to right, #000 62%, transparent);
  mask-image: linear-gradient(to right, #000 62%, transparent);
}
.x { position: relative; width: 16px; height: 16px; margin-left: 10px; }
.newtab { margin: 33px 0 0 -2px; }
.profile { margin: 24px 0 0 20px; font-size: 24px; line-height: 34px; letter-spacing: -.5px; }

.toolbar { display: flex; align-items: center; height: 71px; padding-left: 23px; }
.toolbar > svg { margin-right: 28px; }
.omnibox {
  display: flex;
  align-items: center;
  width: 2320px;
  height: 55px;
  margin-left: -6px;
  margin-top: 1px;
  padding: 0 13px 0 18px;
  border: 2px solid #b3b3b3;
  border-width: 2px 1.500px;
  border-radius: 7px;
  background: #fff;
  font-size: 27px;
}
.secure { width: 100px; margin-left: 14px; padding-top: 2px; letter-spacing: 0; color: #3a7d3e; }
.rule { width: 2px; height: 32px; margin: 0 13px 0 1px; background: #c2c2c2; }
.url { flex: 1; padding-top: 2px; color: #828282; letter-spacing: .12px; white-space: nowrap; }
.url em { font-style: normal; color: #3a7d3e; }
.url b { font-weight: 400; color: #000; }
.extensions { display: flex; align-items: center; gap: 24px; margin-left: 21px; }
.extensions svg:last-child { margin-left: 4px; }

.bookmarks {
  display: grid;
  grid-template-columns: repeat(15, 56px) 148px 158px 164px 56px 56px 108px 116px 122px 130px 158px 130px 158px 1fr auto;
  align-items: center;
  height: 49px;
  padding: 0 22px 9px 24px;
  border-bottom: 1.500px solid #b0b0b0;
  font-size: 23px;
  letter-spacing: .8px;
  white-space: nowrap;
}
.bookmarks a { display: flex; align-items: center; gap: 8px; }
.bookmarks a svg { width: 32px; height: 32px; }
.bookmarks .tight { letter-spacing: .54px; }
.bookmarks .more { width: 14px; height: 12px; }

/* form confirmation page */
.page {
  display: flex;
  flex-direction: column;
  flex: 1;
  background: linear-gradient(#613cae 556px, #ebe7f5 556px);
  font-family: Roboto, "Liberation Sans", sans-serif;
  letter-spacing: 0;
}
.card {
  width: 1280px;
  height: 494px;
  margin: 356px 0 0 786px;
  padding: 69px 67px 0;
  border-top: 16px solid #ab8bf9;
  background: #fff;
  box-shadow: 0 3px 5px rgba(0,0,0,.35), 0 0 4px rgba(0,0,0,.2);
}
.card h1 { margin: 0 0 0 -1px; font-size: 68px; line-height: 80px; font-weight: 400; color: #212121; }
.card p { margin: 41px 0 52px; font-size: 28px; line-height: 38px; color: #111; }
.card a { display: block; width: max-content; font-size: 28px; line-height: 38px; color: #0000e0; }
.legal { margin: 94px 0 0; width: 2850px; text-align: center; font-size: 24px; line-height: 32px; color: #4c4a50; }
.logo { display: flex; align-items: baseline; justify-content: center; width: 2851px; margin: 35px 0 0; line-height: 60px; font-family: Lato, sans-serif; color: #aeaab6; }
.logo b { font-size: 48px; font-weight: 600; letter-spacing: -.5px; }
.logo span { margin-left: 7px; font-size: 44px; letter-spacing: .5px; }

/* dock */
.dock {
  position: absolute;
  left: 104px; top: 1652px;
  display: flex;
  width: 2672px;
  height: 148px;
  padding-left: 8px;
  border-radius: 10px 10px 0 0;
  background:
    linear-gradient(to right, rgba(124,124,124,0) 69%, rgba(124,124,124,1) 74%, rgba(124,124,124,1) 78.500%, rgba(140,140,140,.6) 84%, rgba(150,150,150,.25) 90%, rgba(150,150,150,0)),
    linear-gradient(#b2b2b7, #bcbcc3 50%, #cfd0d8);
  box-shadow: 0 0 4px rgba(80,60,90,.5), 0 0 90px rgba(60,45,70,.16);
}
.app { position: relative; width: 123.900px; height: 148px; }
.app svg { width: 124px; height: 148px; filter: drop-shadow(0 2px 2px rgba(0,0,0,.3)); }
.run::after { content: ""; position: absolute; left: 57px; top: 136px; width: 8px; height: 9px; border-radius: 50%; background: #45474c; }
.petals rect { mix-blend-mode: multiply; }
.sep { width: 2px; height: 108px; margin: 20px 24px 0 26px; background: #85868a; }
```
